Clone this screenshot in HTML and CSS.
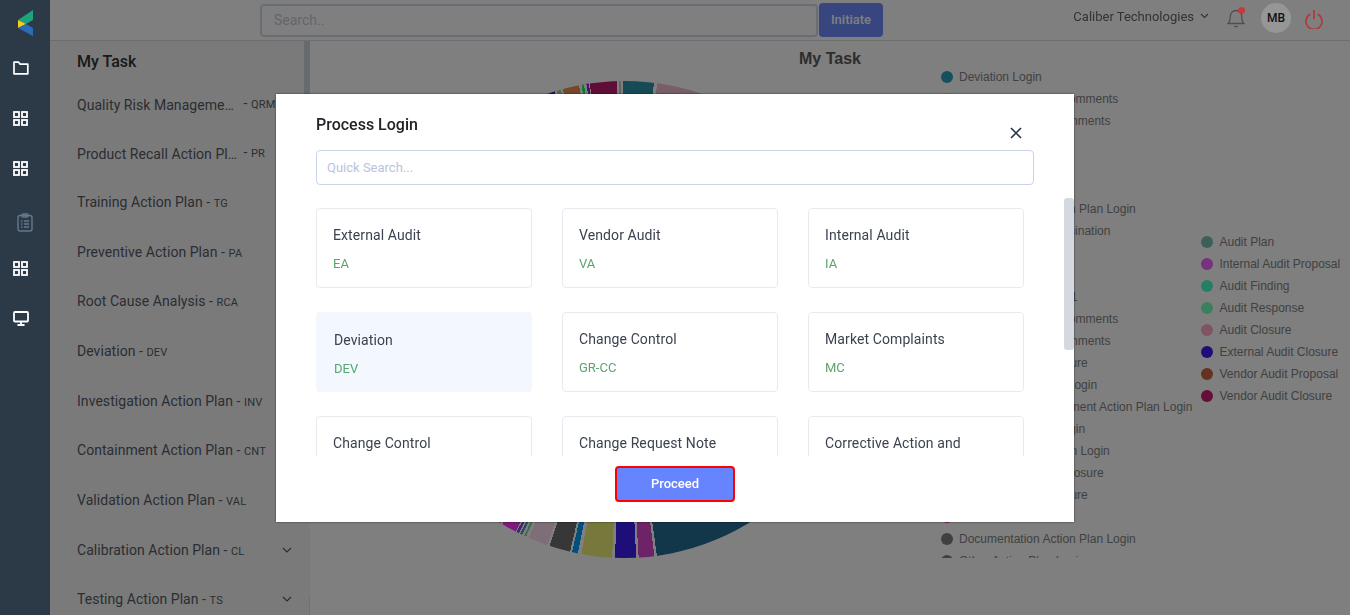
FILE: index.html
```html
<!DOCTYPE html>
<html>
<head>
    <title>Process Login</title>
    <meta name="viewport" content="width=device-width, initial-scale=1">
    <link rel="stylesheet" href="styles.css">
</head>
<body>
    <div class="page">
        <nav class="sidebar">
            <div class="logo">
                <svg width="16" height="27" viewBox="0 0 16 27">
                    <polygon points="0,10 15,0 15,10 8,14" fill="#1fa37a"/>
                    <polygon points="0,10 8,14 0,18" fill="#f2cf1d"/>
                    <polygon points="0,18 8,14 15,18 15,26" fill="#2b6cb8"/>
                </svg>
            </div>
            <div class="nav-item">
                <svg width="16" height="14" viewBox="0 0 16 14" fill="none" stroke="#fff" stroke-width="1.7" stroke-linejoin="round"><path d="M1 1.2h4.600l1.600 2h7.600v9.600H1z"/></svg>
            </div>
            <div class="nav-item">
                <svg width="15" height="15" viewBox="0 0 15 15" fill="none" stroke="#fff" stroke-width="1.8"><rect x="1" y="1" width="5" height="5"/><rect x="9" y="1" width="5" height="5"/><rect x="1" y="9" width="5" height="5"/><rect x="9" y="9" width="5" height="5"/></svg>
            </div>
            <div class="nav-item">
                <svg width="15" height="15" viewBox="0 0 15 15" fill="none" stroke="#fff" stroke-width="1.8"><rect x="1" y="1" width="5" height="5"/><rect x="9" y="1" width="5" height="5"/><rect x="1" y="9" width="5" height="5"/><rect x="9" y="9" width="5" height="5"/></svg>
            </div>
            <div class="nav-item nav-dim">
                <svg width="16" height="19" viewBox="0 0 16 19" fill="none" stroke="#66788a" stroke-width="1.4" stroke-linejoin="round"><rect x="1" y="2.500" width="14" height="15.500" rx="2"/><rect x="5" y="1" width="6" height="3" rx="1"/><path d="M4 8h1.500M7 8h5M4 11h1.500M7 11h5M4 14h1.500M7 14h5"/></svg>
            </div>
            <div class="nav-item">
                <svg width="15" height="15" viewBox="0 0 15 15" fill="none" stroke="#fff" stroke-width="1.8"><rect x="1" y="1" width="5" height="5"/><rect x="9" y="1" width="5" height="5"/><rect x="1" y="9" width="5" height="5"/><rect x="9" y="9" width="5" height="5"/></svg>
            </div>
            <div class="nav-item">
                <svg width="16" height="15" viewBox="0 0 16 15" fill="none" stroke="#fff" stroke-width="1.8"><rect x="1" y="1" width="14" height="9.500" rx="1"/><path d="M8 11v2.500M4.500 14h7"/></svg>
            </div>
        </nav>

        <div class="main">
            <header class="topbar">
                <input class="top-search" type="text" placeholder="Search..">
                <button class="initiate">Initiate</button>
                <div class="top-right">
                    <span class="company">Caliber Technologies</span>
                    <svg class="company-arrow" width="9" height="6" viewBox="0 0 9 6" fill="none" stroke="#333" stroke-width="1.1"><path d="M1 1l3.500 3.500L8 1"/></svg>
                    <div class="bell">
                        <svg width="18" height="21" viewBox="0 0 18 21" fill="none" stroke="#4a5058" stroke-width="1.3"><path d="M1 16.500c2-1.500 2.200-3.500 2.200-6.500 0-3.500 2.300-6.500 5.800-6.500s5.800 3 5.800 6.500c0 3 .2 5 2.200 6.500z"/><path d="M7 19.500h4"/></svg>
                        <span class="bell-dot"></span>
                    </div>
                    <div class="avatar">MB</div>
                    <svg class="power" width="18" height="19" viewBox="0 0 18 19" fill="none" stroke="#b03a3e" stroke-width="1.7"><path d="M5.200 4.300a8 8 0 1 0 7.600 0"/><path d="M9 0v9"/></svg>
                </div>
            </header>

            <div class="content">
                <aside class="tasks">
                    <span class="tasks-thumb"></span>
                    <h3>My Task</h3>
                    <ul class="task-list">
                        <li><span class="task-name cut">Quality Risk Management Action Plan</span> <span class="task-sep">- <small>QRM</small></span></li>
                        <li><span class="task-name cut">Product Recall Action Plan Login</span> <span class="task-sep">- <small>PR</small></span></li>
                        <li><span class="task-name">Training Action Plan</span> - <small>TG</small></li>
                        <li><span class="task-name">Preventive Action Plan</span> - <small>PA</small></li>
                        <li><span class="task-name">Root Cause Analysis</span> - <small>RCA</small></li>
                        <li><span class="task-name">Deviation</span> - <small>DEV</small></li>
                        <li><span class="task-name">Investigation Action Plan</span> - <small>INV</small></li>
                        <li><span class="task-name">Containment Action Plan</span> - <small>CNT</small></li>
                        <li><span class="task-name">Validation Action Plan</span> - <small>VAL</small></li>
                        <li class="has-arrow"><span class="task-name">Calibration Action Plan</span> - <small>CL</small>
                            <svg class="task-arrow" width="10" height="6" viewBox="0 0 10 6" fill="none" stroke="#4f5660" stroke-width="1.1"><path d="M1 1l4 4 4-4"/></svg></li>
                        <li class="has-arrow"><span class="task-name">Testing Action Plan</span> - <small>TS</small>
                            <svg class="task-arrow" width="10" height="6" viewBox="0 0 10 6" fill="none" stroke="#4f5660" stroke-width="1.1"><path d="M1 1l4 4 4-4"/></svg></li>
                    </ul>
                </aside>

                <section class="chart">
                    <h3 class="chart-title">My Task</h3>
                    <div class="chart-row">
                        <div class="pie"></div>
                        <div class="legend">
                            <ul class="legend-col legend-long">
                                <li><i class="dot c-dev"></i>Deviation Login</li>
                                <li><i class="dot c-grey"></i>Change Control IT Comments</li>
                                <li><i class="dot c-grey"></i>Change Request Comments</li>
                                <li><i class="dot c-grey"></i>Risk Login</li>
                                <li><i class="dot c-grey"></i>Audit Login</li>
                                <li><i class="dot c-grey"></i>Audit Report</li>
                                <li><i class="dot c-grey"></i>Documentation Action Plan Login</li>
                                <li><i class="dot c-grey"></i>Investigations Determination</li>
                                <li><i class="dot c-grey"></i>Training Login</li>
                                <li><i class="dot c-grey"></i>Recall Login</li>
                                <li><i class="dot c-grey"></i>Effectiveness Check 1</li>
                                <li><i class="dot c-grey"></i>Change Control IT Comments</li>
                                <li><i class="dot c-grey"></i>Change Request Comments</li>
                                <li><i class="dot c-grey"></i>Change Control Closure</li>
                                <li><i class="dot c-grey"></i>Product Recall Plan Login</li>
                                <li><i class="dot c-grey"></i>Quality Risk Management Action Plan Login</li>
                                <li><i class="dot c-grey"></i>Qualification Plan Login</li>
                                <li><i class="dot c-grey"></i>Corrective Action Plan Login</li>
                                <li><i class="dot c-grey"></i>Market Complaints Closure</li>
                                <li><i class="dot c-grey"></i>Change Control Closure</li>
                                <li><i class="dot c-mag"></i>Closure</li>
                                <li><i class="dot c-doc"></i>Documentation Action Plan Login</li>
                                <li><i class="dot c-doc"></i>Other Action Plan Login</li>
                            </ul>
                            <ul class="legend-col legend-short">
                                <li><i class="dot c-plan"></i>Audit Plan</li>
                                <li><i class="dot c-proposal"></i>Internal Audit Proposal</li>
                                <li><i class="dot c-finding"></i>Audit Finding</li>
                                <li><i class="dot c-response"></i>Audit Response</li>
                                <li><i class="dot c-closure"></i>Audit Closure</li>
                                <li><i class="dot c-external"></i>External Audit Closure</li>
                                <li><i class="dot c-vendor"></i>Vendor Audit Proposal</li>
                                <li><i class="dot c-vclosure"></i>Vendor Audit Closure</li>
                            </ul>
                        </div>
                    </div>
                </section>
            </div>
        </div>
    </div>

    <div class="overlay">
        <div class="modal">
            <div class="modal-head">
                <h4>Process Login</h4>
                <svg class="close" width="12" height="12" viewBox="0 0 12 12" fill="none" stroke="#2b3a4a" stroke-width="1.7"><path d="M1 1l10 10M11 1L1 11"/></svg>
            </div>
            <input class="quick-search" type="text" placeholder="Quick Search...">
            <div class="cards-wrap">
                <span class="cards-thumb"></span>
                <div class="cards">
                    <div class="card"><p>External Audit</p><span>EA</span></div>
                    <div class="card"><p>Vendor Audit</p><span>VA</span></div>
                    <div class="card"><p>Internal Audit</p><span>IA</span></div>
                    <div class="card active"><p>Deviation</p><span>DEV</span></div>
                    <div class="card"><p>Change Control</p><span>GR-CC</span></div>
                    <div class="card"><p>Market Complaints</p><span>MC</span></div>
                    <div class="card"><p>Change Control</p><span>CC</span></div>
                    <div class="card"><p>Change Request Note</p><span>CRN</span></div>
                    <div class="card"><p>Corrective Action and</p><span>CAPA</span></div>
                </div>
            </div>
            <div class="modal-foot">
                <button class="proceed">Proceed</button>
            </div>
        </div>
    </div>
</body>
</html>
```

FILE: styles.css
```css
* {
    box-sizing: border-box;
}
html, body {
    height: 100%;
}
body {
    margin: 0;
    font-family: Roboto, Arial, sans-serif;
    background-color: #fff;
    overflow: hidden;
}
ul {
    list-style: none;
    margin: 0;
    padding: 0;
}
.page {
    display: flex;
    height: 615px;
}

/* sidebar stays above the overlay */
.sidebar {
    position: relative;
    z-index: 20;
    width: 50px;
    flex-shrink: 0;
    background-color: #2c3a48;
}
.logo {
    height: 43px;
    padding: 10px 0 0 18px;
}
.nav-item {
    height: 50px;
    padding-left: 13px;
    display: flex;
    align-items: center;
}
.nav-dim {
    padding: 8px 0 0 17px;
}

.main {
    flex: 1;
    display: flex;
    flex-direction: column;
    min-width: 0;
}
.topbar {
    height: 41px;
    flex-shrink: 0;
    display: flex;
    align-items: center;
    padding-left: 210px;
    border-bottom: 1px solid #dcdcdc;
    background-color: #fff;
}
.top-search {
    width: 558px;
    height: 33px;
    padding: 0 12px;
    border: 2px solid #cfdcea;
    border-radius: 4px;
    font-family: Roboto, Arial, sans-serif;
    font-size: 14px;
}
.top-search::placeholder {
    color: #c4ccdc;
}
.initiate {
    width: 64px;
    height: 34px;
    margin-left: 1px;
    padding: 0 0 2px;
    border: none;
    border-radius: 4px;
    background-color: #6f8cff;
    color: #fff;
    font-family: Roboto, Arial, sans-serif;
    font-size: 13px;
    font-weight: 500;
}
.top-right {
    position: relative;
    z-index: 20;
    margin-left: auto;
    display: flex;
    align-items: center;
    padding-right: 27px;
    height: 40px;
}
.company {
    font-size: 13px;
    color: #333;
    margin-top: -8px;
}
.company-arrow {
    margin: -8px 0 0 6px;
}
.bell {
    position: relative;
    margin: -5px 0 0 18px;
    height: 21px;
}
.bell svg {
    display: block;
}
.bell-dot {
    position: absolute;
    top: 0;
    right: 0;
    width: 7px;
    height: 7px;
    border-radius: 50%;
    background-color: #c83a3a;
}
.avatar {
    width: 30px;
    height: 30px;
    margin: -4px 0 0 16px;
    border-radius: 50%;
    background-color: #969696;
    color: #111;
    font-size: 12px;
    font-weight: 500;
    line-height: 30px;
    text-align: center;
}
.power {
    margin: -2px 0 0 14px;
}

.content {
    flex: 1;
    display: flex;
    min-height: 0;
}
.tasks {
    position: relative;
    width: 260px;
    flex-shrink: 0;
    padding: 0 0 0 27px;
    background-color: #f5f5f5;
    overflow: hidden;
}
.tasks::after {
    content: "";
    position: absolute;
    right: 0;
    bottom: 0;
    width: 1px;
    height: 20px;
    background-color: #e2e2e2;
}
.tasks h3 {
    margin: 11px 0 15.5px;
    font-size: 16px;
    line-height: 20px;
    font-weight: 500;
    color: #333;
}
.tasks-thumb {
    position: absolute;
    top: 0;
    right: 0;
    width: 6px;
    height: 120px;
    background-color: #d0d6da;
}
.task-list li {
    position: relative;
    height: 49.7px;
    line-height: 20px;
    padding-top: 5px;
    font-size: 14px;
    letter-spacing: 0.05px;
    color: #555b66;
    white-space: nowrap;
}
.task-list small {
    font-size: 11px;
    letter-spacing: 0.2px;
}
.task-name.cut {
    display: inline-block;
    vertical-align: bottom;
    width: 163px;
    overflow: hidden;
    text-overflow: ellipsis;
}
.task-arrow {
    position: absolute;
    top: 12px;
    left: 205px;
}

.chart {
    flex: 1;
    min-width: 0;
    background-color: #fff;
}
.chart-title {
    margin: 0;
    padding-top: 9px;
    height: 25px;
    line-height: 18px;
    font-family: "Liberation Sans", Arial, sans-serif;
    font-size: 16px;
    font-weight: bold;
    text-align: center;
    color: #5a5a5a;
}
.chart-row {
    display: flex;
    height: 492px;
    padding-left: 76px;
}
.pie {
    width: 477px;
    height: 477px;
    margin-top: 15px;
    flex-shrink: 0;
    border-radius: 50%;
    background: conic-gradient(
        #2e94ae 0deg 7.1deg, #fff 7.1deg 7.9deg,
        #f0bccc 7.9deg 100deg,
        #246e94 100deg 172.2deg, #fff 172.2deg 172.8deg,
        #dc46d2 172.8deg 176.6deg, #fff 176.6deg 177.2deg,
        #3c1ef0 177.2deg 182.3deg, #fff 182.3deg 183deg,
        #ecf078 183deg 190.4deg, #fff 190.4deg 191.3deg,
        #00a0ff 191.3deg 192.7deg, #fff 192.7deg 193.2deg,
        #6e6e6e 193.2deg 198.3deg, #fff 198.3deg 198.9deg,
        #fadcf0 198.9deg 203.7deg, #fff 203.7deg 204.4deg,
        #90d0a0 204.4deg 204.9deg, #fff 204.9deg 205.4deg,
        #5090e0 205.4deg 206deg, #fff 206deg 206.3deg,
        #8050e0 206.3deg 206.9deg, #fff 206.9deg 207.2deg,
        #ff32ff 207.2deg 210.8deg, #fff 210.8deg 211.4deg,
        #909090 211.4deg 341.5deg,
        #3c1ef0 341.5deg 343deg, #fff 343deg 343.5deg,
        #a0e0a0 343.5deg 344.5deg, #fff 344.5deg 345deg,
        #f08c50 345deg 349deg, #fff 349deg 349.6deg,
        #28f050 349.6deg 350.2deg, #fff 350.2deg 350.8deg,
        #8c28dc 350.8deg 351.4deg, #fff 351.4deg 351.6deg,
        #be1e6e 351.6deg 358.2deg, #fff 358.2deg 358.7deg,
        #c8c8c8 358.7deg 359.2deg, #fff 359.2deg 359.6deg,
        #2e94ae 359.6deg 360deg
    );
}
.legend {
    display: flex;
    align-items: center;
    gap: 9px;
    margin-left: 78px;
    height: 492px;
    overflow: hidden;
    font-family: "Liberation Sans", Arial, sans-serif;
    font-size: 12px;
    color: #828282;
}
.legend-long {
    align-self: flex-start;
}
.legend-short {
    margin-top: 14px;
}
.legend-col li {
    display: flex;
    align-items: center;
    height: 22px;
    white-space: nowrap;
}
.dot {
    width: 12px;
    height: 12px;
    margin-right: 6px;
    border-radius: 50%;
    flex-shrink: 0;
}
.c-dev { background-color: #28a0be; }
.c-grey { background-color: #e8e8e8; }
.c-mag { background-color: #ff28c8; }
.c-doc { background-color: #808080; }
.c-plan { background-color: #78bfb4; }
.c-proposal { background-color: #f064fa; }
.c-finding { background-color: #48ffc8; }
.c-response { background-color: #78ffbe; }
.c-closure { background-color: #ffaac8; }
.c-external { background-color: #3c1ef0; }
.c-vendor { background-color: #c8643c; }
.c-vclosure { background-color: #c81e6e; }

/* modal */
.overlay {
    position: fixed;
    top: 0;
    left: 0;
    right: 0;
    bottom: 0;
    z-index: 10;
    display: flex;
    justify-content: center;
    padding-top: 94px;
    background-color: rgba(0, 0, 0, 0.5);
}
.modal {
    width: 798px;
    height: 428px;
    padding: 0 0 0 40px;
    background-color: #fff;
    box-shadow: 0 0 2px rgba(0, 0, 0, 0.6);
}
.modal-head {
    position: relative;
    height: 56px;
    padding-top: 21px;
}
.modal-head h4 {
    margin: 0;
    font-size: 16px;
    line-height: 20px;
    font-weight: 500;
    color: #212529;
}
.close {
    position: absolute;
    top: 33px;
    right: 52px;
}
.quick-search {
    display: block;
    width: 718px;
    height: 35px;
    padding: 0 10px;
    border: 1px solid #c8d5e8;
    border-radius: 4px;
    font-family: Roboto, Arial, sans-serif;
    font-size: 13px;
}
.quick-search::placeholder {
    color: #b9c4dc;
}
.cards-wrap {
    position: relative;
    height: 258px;
    margin-top: 13px;
    padding-top: 10px;
    overflow: hidden;
}
.cards-thumb {
    position: absolute;
    top: 0;
    right: 0;
    width: 10px;
    height: 152px;
    border-radius: 3px;
    background-color: #d3d9de;
}
.cards {
    display: grid;
    grid-template-columns: repeat(3, 216px);
    grid-auto-rows: 80px;
    column-gap: 30px;
    row-gap: 24px;
}
.card {
    padding: 17px 16px;
    border: 1px solid #e8eaef;
    border-radius: 4px;
    background-color: #fff;
}
.card p {
    margin: 0 0 11px;
    font-size: 14px;
    line-height: 18px;
    letter-spacing: 0.1px;
    color: #3c4250;
}
.card span {
    display: block;
    font-size: 13px;
    line-height: 18px;
    color: #5aa46e;
}
.card.active {
    padding: 19px 18px;
    border: none;
    background-color: #f3f7fe;
}
.modal-foot {
    padding: 10px 0 0 299px;
}
.proceed {
    display: block;
    width: 120px;
    height: 36px;
    padding: 0 0 2px;
    border: 2px solid #f00;
    border-radius: 4px;
    background-color: #6784ff;
    color: #fff;
    font-family: Roboto, Arial, sans-serif;
    font-size: 13px;
    font-weight: 500;
}
```
